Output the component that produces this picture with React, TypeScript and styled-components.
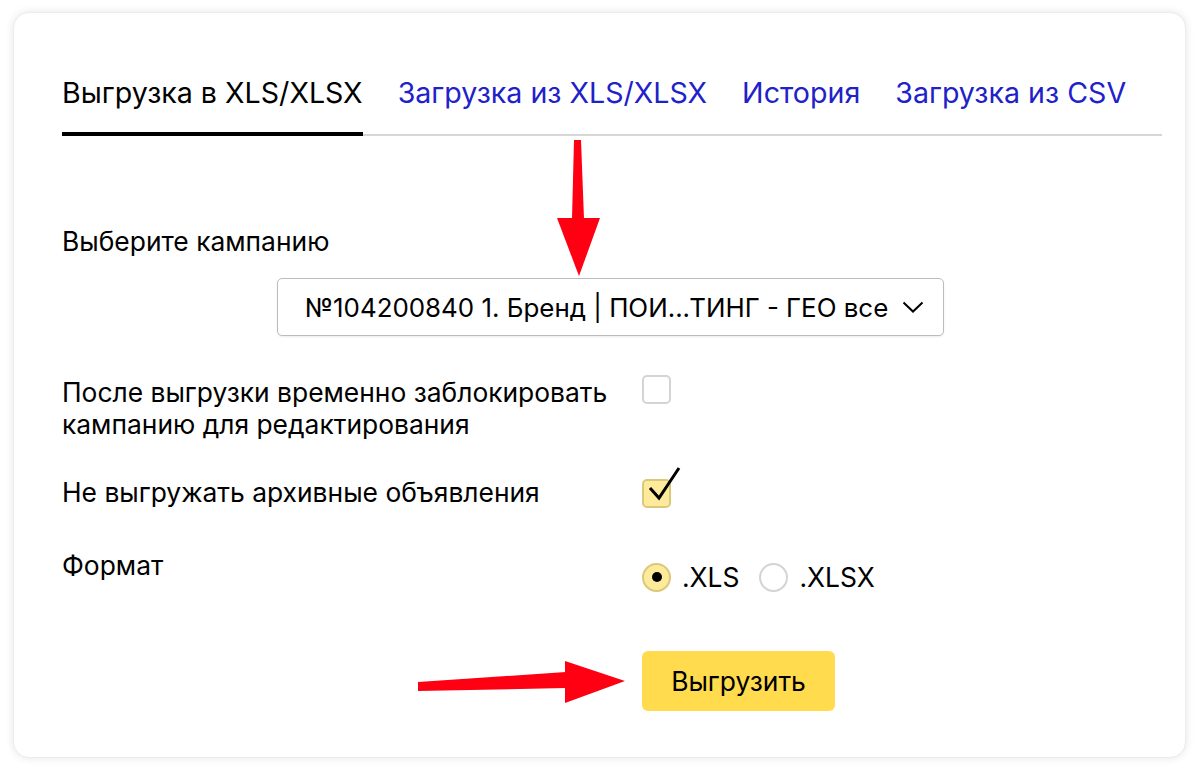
import React, { useState } from 'react';
import styled, { createGlobalStyle } from 'styled-components';

const GlobalStyle = createGlobalStyle`
  html, body {
    margin: 0;
    padding: 0;
    background: #ffffff;
  }
  body {
    font-family: Inter, "Noto Sans", Arial, sans-serif;
    color: #000;
    -webkit-font-smoothing: antialiased;
  }
`;

const Page = styled.div`
  padding: 12px 13px;
`;

const Card = styled.div`
  position: relative;
  box-sizing: border-box;
  width: 1173px;
  height: 746px;
  padding: 62px 23px 0 48px;
  background: #fff;
  border-radius: 16px;
  border: 1px solid #ececec;
  box-shadow: 0 0 8px rgba(0, 0, 0, 0.1);
`;

const TabList = styled.div`
  display: flex;
  gap: 35px;
  border-bottom: 2px solid #d6d6d6;
`;

const Tab = styled.div<{ $active?: boolean }>`
  font-size: 28.6px;
  line-height: 36px;
  padding-bottom: 21px;
  margin-bottom: -2px;
  border-bottom: 4px solid ${({ $active }) => ($active ? '#000' : 'transparent')};
  color: ${({ $active }) => ($active ? '#000' : '#2121c9')};
  cursor: pointer;
  white-space: nowrap;
`;

const Label = styled.div<{ $top?: number }>`
  font-size: 26.4px;
  line-height: 32px;
  margin-top: ${({ $top = 0 }) => $top}px;
`;

const SelectRow = styled.div`
  display: flex;
  justify-content: center;
  margin-top: 21px;
  padding-right: 3px;
`;

const SelectBox = styled.button`
  display: flex;
  align-items: center;
  gap: 14px;
  height: 58px;
  padding: 0 19px 0 27px;
  background: #fff;
  border: 1.5px solid #bcbcbc;
  border-radius: 5px;
  font-family: inherit;
  font-size: 25.9px;
  color: #000;
  cursor: pointer;
  box-shadow: 0 1px 2px rgba(0, 0, 0, 0.08);
`;

const FieldRow = styled.div<{ $top: number }>`
  display: grid;
  grid-template-columns: 580px 1fr;
  align-items: start;
  margin-top: ${({ $top }) => $top}px;
`;

const FieldLabel = styled.div`
  font-size: 26.4px;
  line-height: 32px;
`;

const Control = styled.div<{ $offset?: number }>`
  display: flex;
  align-items: center;
  margin-top: ${({ $offset = 0 }) => $offset}px;
`;

const CheckBox = styled.span<{ $checked?: boolean }>`
  position: relative;
  box-sizing: border-box;
  width: 29px;
  height: 29px;
  border-radius: 5px;
  border: 2px solid ${({ $checked }) => ($checked ? '#dcc879' : '#d4d4d4')};
  background: ${({ $checked }) => ($checked ? '#feea9b' : '#fff')};
  cursor: pointer;
`;

const CheckMark = styled.svg`
  position: absolute;
  left: 3px;
  top: -12px;
  overflow: visible;
`;

const RadioGroup = styled.div`
  display: flex;
  align-items: center;
  gap: 20px;
`;

const RadioOption = styled.label`
  display: flex;
  align-items: center;
  gap: 11px;
  font-size: 26.4px;
  line-height: 32px;
  cursor: pointer;
`;

const RadioCircle = styled.span<{ $checked?: boolean }>`
  box-sizing: border-box;
  width: 29px;
  height: 29px;
  border-radius: 50%;
  border: 2px solid ${({ $checked }) => ($checked ? '#dcc879' : '#d4d4d4')};
  background: ${({ $checked }) => ($checked ? '#feea9b' : '#fff')};
  display: flex;
  align-items: center;
  justify-content: center;
  &::after {
    content: '';
    width: 10px;
    height: 10px;
    border-radius: 50%;
    background: ${({ $checked }) => ($checked ? '#000' : 'transparent')};
  }
`;

const SubmitButton = styled.button`
  width: 193px;
  height: 60px;
  border: none;
  border-radius: 6px;
  background: #ffdb4d;
  font-family: inherit;
  font-size: 26.4px;
  color: #000;
  cursor: pointer;
`;

const Annotation = styled.svg`
  position: absolute;
  left: -14px;
  top: -13px;
  pointer-events: none;
`;

const Chevron = () => (
  <svg width="22" height="12" viewBox="0 0 22 12">
    <path d="M1.5 1.5 L11 10.5 L20.5 1.5" fill="none" stroke="#000" strokeWidth="2" />
  </svg>
);

export default function App() {
  const [lock, setLock] = useState(false);
  const [skipArchived, setSkipArchived] = useState(true);
  const [format, setFormat] = useState<'xls' | 'xlsx'>('xls');

  return (
    <>
      <GlobalStyle />
      <Page>
        <Card>
          <TabList>
            <Tab $active>Выгрузка в XLS/XLSX</Tab>
            <Tab>Загрузка из XLS/XLSX</Tab>
            <Tab>История</Tab>
            <Tab>Загрузка из CSV</Tab>
          </TabList>

          <Label $top={89}>Выберите кампанию</Label>
          <SelectRow>
            <SelectBox type="button">
              <span>№104200840 1. Бренд | ПОИ...ТИНГ - ГЕО все</span>
              <Chevron />
            </SelectBox>
          </SelectRow>

          <FieldRow $top={40}>
            <FieldLabel>
              После выгрузки временно заблокировать
              <br />
              кампанию для редактирования
            </FieldLabel>
            <Control $offset={-1}>
              <CheckBox onClick={() => setLock(!lock)} $checked={lock} />
            </Control>
          </FieldRow>

          <FieldRow $top={36}>
            <FieldLabel>Не выгружать архивные объявления</FieldLabel>
            <Control $offset={3}>
              <CheckBox onClick={() => setSkipArchived(!skipArchived)} $checked={skipArchived}>
                {skipArchived && (
                  <CheckMark width="30" height="30" viewBox="0 0 30 30">
                    <path d="M3 19 L12 29 L32 -1" fill="none" stroke="#000" strokeWidth="3" />
                  </CheckMark>
                )}
              </CheckBox>
            </Control>
          </FieldRow>

          <FieldRow $top={41}>
            <FieldLabel>Формат</FieldLabel>
            <Control $offset={12}>
              <RadioGroup>
                <RadioOption onClick={() => setFormat('xls')}>
                  <RadioCircle $checked={format === 'xls'} />
                  .XLS
                </RadioOption>
                <RadioOption onClick={() => setFormat('xlsx')}>
                  <RadioCircle $checked={format === 'xlsx'} />
                  .XLSX
                </RadioOption>
              </RadioGroup>
            </Control>
          </FieldRow>

          <FieldRow $top={58}>
            <div />
            <Control>
              <SubmitButton type="button">Выгрузить</SubmitButton>
            </Control>
          </FieldRow>

          {/* red pointer arrows drawn over the form, page coordinates */}
          <Annotation width="1199" height="772" viewBox="0 0 1199 772">
            <polygon points="574,140 581,140 584,219 572,219" fill="#ff0013" />
            <polygon points="557,218 600,218 579,276" fill="#ff0013" />
            <polygon points="418,682 566,672 566,688 418,691" fill="#ff0013" />
            <polygon points="565,661 625,681 565,703" fill="#ff0013" />
          </Annotation>
        </Card>
      </Page>
    </>
  );
}
